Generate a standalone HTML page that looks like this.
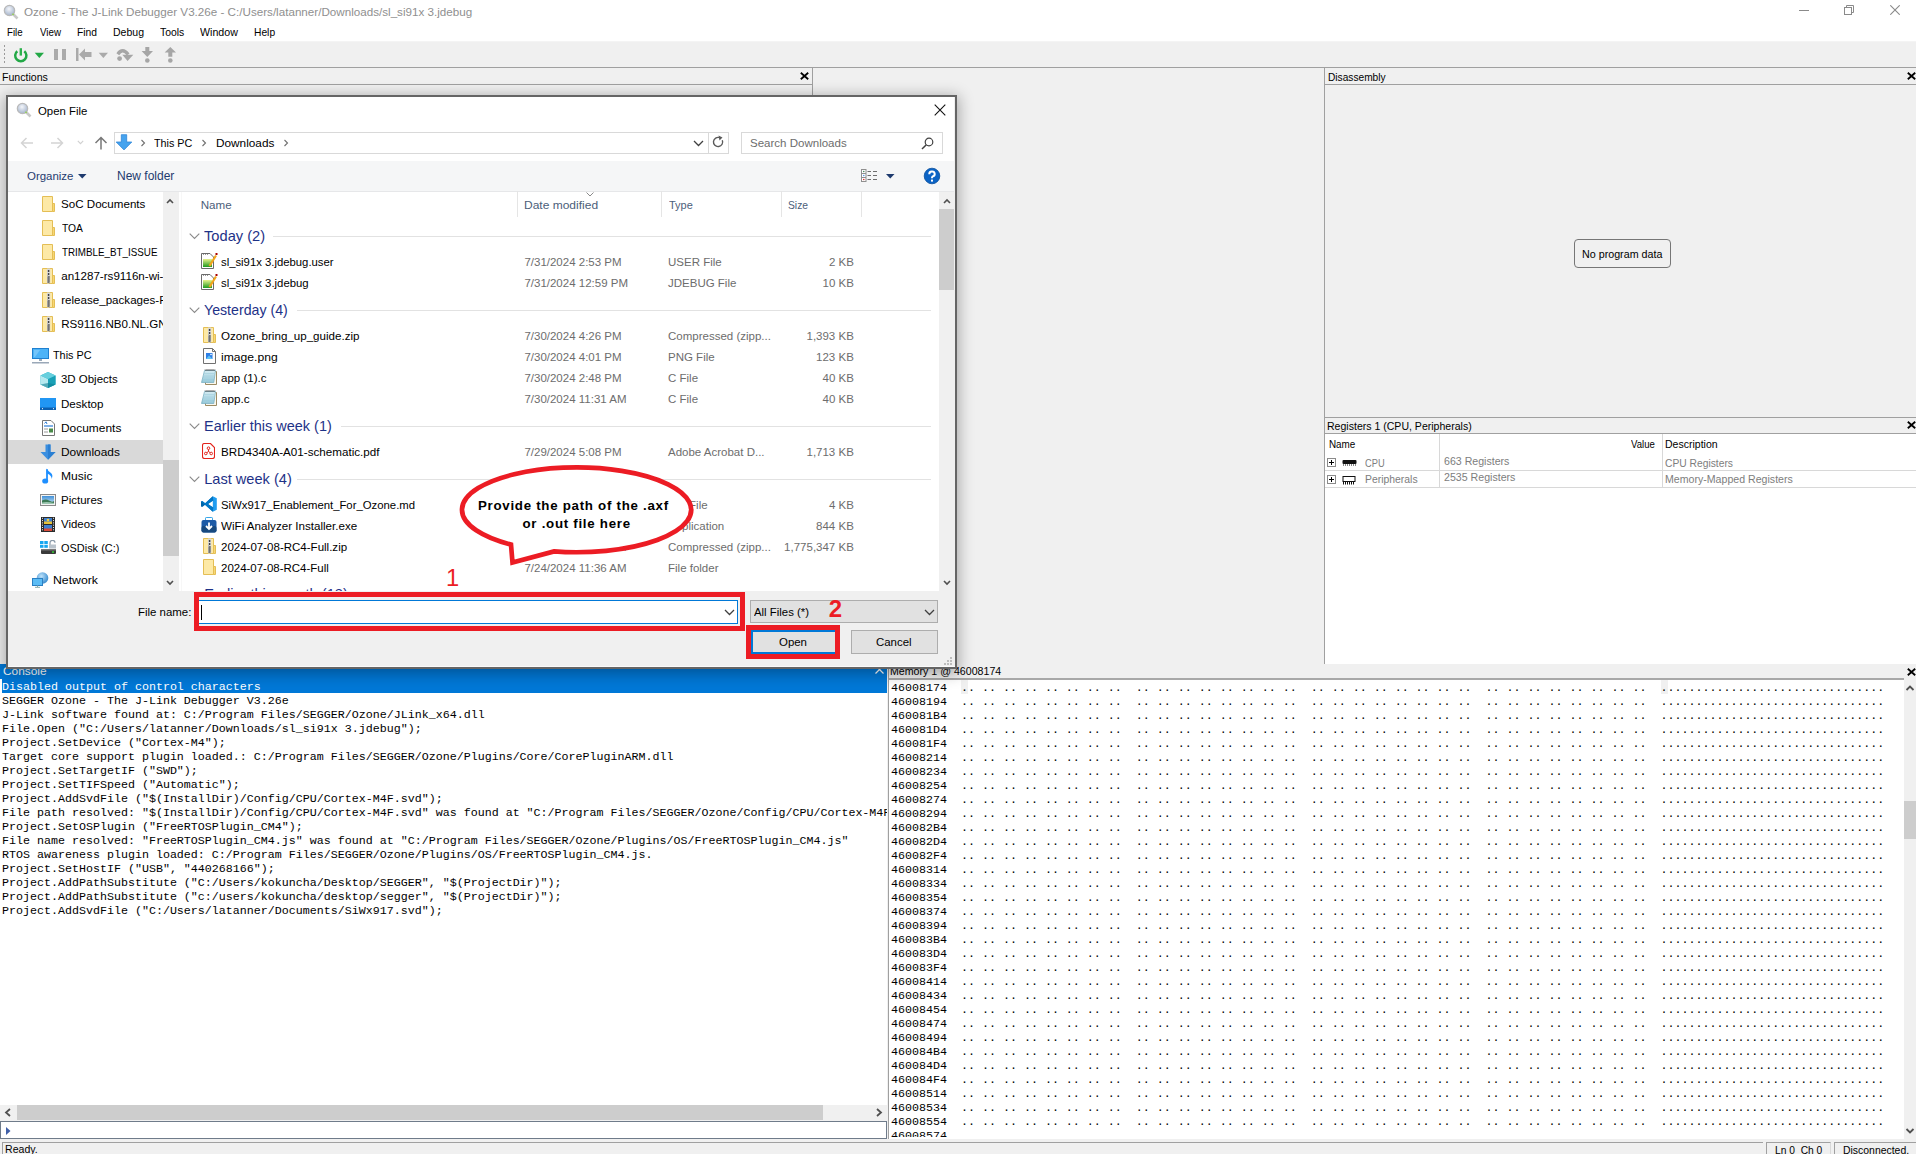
<!DOCTYPE html>
<html><head><meta charset="utf-8">
<style>
*{box-sizing:border-box;margin:0;padding:0}
html,body{width:1916px;height:1154px;overflow:hidden;background:#f0f0f0;font-family:"Liberation Sans",sans-serif;font-size:12px;color:#000;position:relative}
.a{position:absolute}
.t{position:absolute;white-space:pre;line-height:1}
.m{position:absolute;font-family:"Liberation Mono",monospace;font-size:11.67px;line-height:14px;white-space:pre;left:0}
</style></head><body>
<div class="a" style="left:0px;top:0px;width:1916px;height:42px;background:#fff;"></div>
<svg class="a" style="left:2px;top:3px;" width="17" height="17" viewBox="0 0 17 17"><defs><radialGradient id="mg" cx="0.45" cy="0.35" r="0.6"><stop offset="0" stop-color="#f4f6fa"/><stop offset="1" stop-color="#a9b8cf"/></radialGradient></defs><line x1="10" y1="10" x2="15.5" y2="15.5" stroke="#c8c8c8" stroke-width="2.6"/><circle cx="7.5" cy="7.5" r="5.2" fill="url(#mg)" stroke="#b9b9b9" stroke-width="1.2"/><circle cx="11" cy="11.3" r="0.9" fill="#8fd14f"/></svg>
<div class="t" style="top:6px;font-size:11.65px;color:#8f8f8f;left:24px;transform:scaleX(1.0000);transform-origin:left top;">Ozone - The J-Link Debugger V3.26e - C:/Users/latanner/Downloads/sl_si91x 3.jdebug</div>
<div class="a" style="left:1799px;top:10px;width:10px;height:1px;background:#8a8a8a;"></div>
<svg class="a" style="left:1844px;top:5px;" width="10" height="10" viewBox="0 0 10 10"><rect x="0.5" y="2.5" width="7" height="7" fill="none" stroke="#8a8a8a"/><path d="M2.5 2.5V0.5H9.5V7.5H7.5" fill="none" stroke="#8a8a8a"/></svg>
<svg class="a" style="left:1890px;top:5px;" width="10" height="10" viewBox="0 0 10 10"><path d="M0.3 0.3L9.7 9.7M9.7 0.3L0.3 9.7" stroke="#8a8a8a" stroke-width="1.1"/></svg>
<div class="t" style="top:27px;font-size:11px;color:#000;left:7px;transform:scaleX(0.8795);transform-origin:left top;">File</div>
<div class="t" style="top:27px;font-size:11px;color:#000;left:39.5px;transform:scaleX(0.8869);transform-origin:left top;">View</div>
<div class="t" style="top:27px;font-size:11px;color:#000;left:77px;transform:scaleX(0.9348);transform-origin:left top;">Find</div>
<div class="t" style="top:27px;font-size:11px;color:#000;left:113px;transform:scaleX(0.9561);transform-origin:left top;">Debug</div>
<div class="t" style="top:27px;font-size:11px;color:#000;left:160px;transform:scaleX(0.9461);transform-origin:left top;">Tools</div>
<div class="t" style="top:27px;font-size:11px;color:#000;left:200px;transform:scaleX(0.9678);transform-origin:left top;">Window</div>
<div class="t" style="top:27px;font-size:11px;color:#000;left:254px;transform:scaleX(0.9323);transform-origin:left top;">Help</div>
<div class="a" style="left:0px;top:41px;width:1916px;height:1px;background:#f4f4f4;"></div>
<div class="a" style="left:3.5px;top:45px;width:1.5px;height:1.5px;background:#9a9a9a;"></div>
<div class="a" style="left:3.5px;top:49px;width:1.5px;height:1.5px;background:#9a9a9a;"></div>
<div class="a" style="left:3.5px;top:53px;width:1.5px;height:1.5px;background:#9a9a9a;"></div>
<div class="a" style="left:3.5px;top:57px;width:1.5px;height:1.5px;background:#9a9a9a;"></div>
<div class="a" style="left:3.5px;top:61px;width:1.5px;height:1.5px;background:#9a9a9a;"></div>
<svg class="a" style="left:12px;top:46px;" width="18" height="18" viewBox="0 0 18 18"><path d="M5.3 5.2 A5.6 5.6 0 1 0 12.3 5.2" fill="none" stroke="#22a846" stroke-width="2.5"/><line x1="8.8" y1="2.2" x2="8.8" y2="9.6" stroke="#2db24d" stroke-width="2.4"/></svg>
<svg class="a" style="left:34px;top:52px;" width="11" height="7" viewBox="0 0 11 7"><path d="M0.7 0.7H10L5.35 6Z" fill="#22a846"/></svg>
<div class="a" style="left:54px;top:49px;width:4px;height:11px;background:#aaaaaa;"></div>
<div class="a" style="left:62px;top:49px;width:4px;height:11px;background:#aaaaaa;"></div>
<svg class="a" style="left:75px;top:47px;" width="18" height="15" viewBox="0 0 18 15"><rect x="1" y="1" width="2.5" height="13" fill="#aaaaaa"/><path d="M4 7.5L10 1.5V5H16.5V10H10V13.5Z" fill="#aaaaaa"/></svg>
<svg class="a" style="left:98px;top:52px;" width="11" height="7" viewBox="0 0 11 7"><path d="M0.7 0.7H10L5.35 6Z" fill="#aaaaaa"/></svg>
<svg class="a" style="left:116px;top:48px;" width="18" height="15" viewBox="0 0 18 15"><circle cx="3.6" cy="10.6" r="2.4" fill="#a6a6a6"/><path d="M1.8 6.2 Q6.5 -0.8 12.2 6.5" fill="none" stroke="#a6a6a6" stroke-width="3.4"/><path d="M6.3 6.8 L17.3 6.8 L11.6 13 Z" fill="#a6a6a6"/></svg>
<svg class="a" style="left:141px;top:46px;" width="13" height="18" viewBox="0 0 13 18"><path d="M4.3 1H8.3V5H12L6.3 11L0.6 5H4.3Z" fill="#a6a6a6"/><circle cx="6.3" cy="14.5" r="2.3" fill="#a6a6a6"/></svg>
<svg class="a" style="left:164px;top:46px;" width="13" height="18" viewBox="0 0 13 18"><path d="M6.3 1L12 6.5H8.3V10.8H4.3V6.5H0.6Z" fill="#a6a6a6"/><circle cx="6.3" cy="14.5" r="2.3" fill="#a6a6a6"/></svg>
<div class="a" style="left:0px;top:67px;width:1916px;height:1px;background:#a0a0a0;"></div>
<div class="t" style="top:72px;font-size:10.5px;color:#000;left:2px;transform:scaleX(1.0084);transform-origin:left top;">Functions</div>
<svg class="a" style="left:800px;top:72px;" width="9" height="8" viewBox="0 0 9 8"><path d="M0.8 0.8L8.2 7.2M8.2 0.8L0.8 7.2" stroke="#000" stroke-width="1.8"/></svg>
<div class="a" style="left:0px;top:84px;width:812px;height:1px;background:#a0a0a0;"></div>
<div class="a" style="left:812px;top:68px;width:1px;height:596px;background:#a0a0a0;"></div>
<div class="a" style="left:1324px;top:68px;width:1px;height:596px;background:#a0a0a0;"></div>
<div class="t" style="top:72px;font-size:10.5px;color:#000;left:1327.5px;transform:scaleX(0.9679);transform-origin:left top;">Disassembly</div>
<svg class="a" style="left:1907px;top:72px;" width="9" height="8" viewBox="0 0 9 8"><path d="M0.8 0.8L8.2 7.2M8.2 0.8L0.8 7.2" stroke="#000" stroke-width="1.8"/></svg>
<div class="a" style="left:1325px;top:84px;width:591px;height:1px;background:#a0a0a0;"></div>
<div class="a" style="left:1574px;top:239px;width:97px;height:29px;background:#f0f0f0;border:1px solid #767676;border-radius:4px"></div>
<div class="t" style="top:249px;font-size:11px;color:#000;left:1582px;transform:scaleX(0.9739);transform-origin:left top;">No program data</div>
<div class="a" style="left:1325px;top:417px;width:591px;height:1px;background:#a0a0a0;"></div>
<div class="t" style="top:421px;font-size:10.5px;color:#000;left:1327.3px;transform:scaleX(1.0039);transform-origin:left top;">Registers 1 (CPU, Peripherals)</div>
<svg class="a" style="left:1907px;top:421px;" width="9" height="8" viewBox="0 0 9 8"><path d="M0.8 0.8L8.2 7.2M8.2 0.8L0.8 7.2" stroke="#000" stroke-width="1.8"/></svg>
<div class="a" style="left:1325px;top:433px;width:591px;height:1px;background:#a0a0a0;"></div>
<div class="a" style="left:1325px;top:434px;width:591px;height:230px;background:#fff;"></div>
<div class="t" style="top:439px;font-size:10.5px;color:#000;left:1328.8px;transform:scaleX(0.9390);transform-origin:left top;">Name</div>
<div class="t" style="top:439px;font-size:10.5px;color:#000;right:259px;transform:scaleX(0.9131);transform-origin:left top;">Value</div>
<div class="t" style="top:439px;font-size:10.5px;color:#000;left:1665px;transform:scaleX(1.0014);transform-origin:left top;">Description</div>
<div class="a" style="left:1439px;top:434px;width:1px;height:54px;background:#d8d8d8;"></div>
<div class="a" style="left:1662px;top:434px;width:1px;height:54px;background:#d8d8d8;"></div>
<div class="a" style="left:1325px;top:470px;width:591px;height:1px;background:#d8d8d8;"></div>
<div class="a" style="left:1325px;top:487px;width:591px;height:1px;background:#d8d8d8;"></div>
<div class="a" style="left:1327px;top:458.3px;width:9px;height:9px;background:#fff;border:1px solid #8a8a8a"></div>
<div class="a" style="left:1329px;top:462.3px;width:5px;height:1px;background:#000;"></div>
<div class="a" style="left:1331px;top:460.3px;width:1px;height:5px;background:#000;"></div>
<div class="t" style="top:458px;font-size:10.5px;color:#7d7d7d;left:1364.7px;transform:scaleX(0.8836);transform-origin:left top;">CPU</div>
<div class="t" style="top:456px;font-size:10.5px;color:#7d7d7d;left:1443.6px;transform:scaleX(1.0095);transform-origin:left top;">663 Registers</div>
<div class="t" style="top:458px;font-size:10.5px;color:#7d7d7d;left:1665px;transform:scaleX(0.9794);transform-origin:left top;">CPU Registers</div>
<div class="a" style="left:1327px;top:475.0px;width:9px;height:9px;background:#fff;border:1px solid #8a8a8a"></div>
<div class="a" style="left:1329px;top:479.0px;width:5px;height:1px;background:#000;"></div>
<div class="a" style="left:1331px;top:477.0px;width:1px;height:5px;background:#000;"></div>
<div class="t" style="top:474px;font-size:10.5px;color:#7d7d7d;left:1364.7px;transform:scaleX(0.9905);transform-origin:left top;">Peripherals</div>
<div class="t" style="top:472px;font-size:10.5px;color:#7d7d7d;left:1443.6px;transform:scaleX(1.0108);transform-origin:left top;">2535 Registers</div>
<div class="t" style="top:474px;font-size:10.5px;color:#7d7d7d;left:1665px;transform:scaleX(1.0092);transform-origin:left top;">Memory-Mapped Registers</div>
<svg class="a" style="left:1342px;top:459px;" width="15" height="7" viewBox="0 0 15 7"><rect x="0.5" y="1" width="14" height="4" rx="1" fill="#111"/><path d="M1 6H14" stroke="#111" stroke-dasharray="1 1"/></svg>
<svg class="a" style="left:1342px;top:476px;" width="14" height="9" viewBox="0 0 14 9"><rect x="1" y="0.5" width="12" height="5" fill="none" stroke="#111"/><path d="M1 7H13" stroke="#111" stroke-width="3" stroke-dasharray="1 1"/></svg>
<div class="a" style="left:0px;top:664px;width:887px;height:15px;background:#0078d7;"></div>
<div class="t" style="top:666px;font-size:10.5px;color:#ffffff;left:3px;transform:scaleX(1.1288);transform-origin:left top;">Console</div>
<svg class="a" style="left:875px;top:665px;" width="9" height="9" viewBox="0 0 9 9"><path d="M0.5 0.5L8.5 8.5M8.5 0.5L0.5 8.5" stroke="#fff" stroke-width="1.2"/></svg>
<div class="a" style="left:0px;top:679px;width:887px;height:426px;background:#fff;"></div>
<div class="a" style="left:888px;top:664px;width:1px;height:475px;background:#a0a0a0;"></div>
<div class="a" style="left:2px;top:679px;width:885px;height:14px;background:#0078d7;"></div>
<div class="a" style="left:0;top:679px;width:887px;height:260px;overflow:hidden">
<div class="m" style="left:2px;top:1px;color:#fff">Disabled output of control characters</div>
<div class="m" style="left:2px;top:15px;color:#000">SEGGER Ozone - The J-Link Debugger V3.26e</div>
<div class="m" style="left:2px;top:29px;color:#000">J-Link software found at: C:/Program Files/SEGGER/Ozone/JLink_x64.dll</div>
<div class="m" style="left:2px;top:43px;color:#000">File.Open (&quot;C:/Users/latanner/Downloads/sl_si91x 3.jdebug&quot;);</div>
<div class="m" style="left:2px;top:57px;color:#000">Project.SetDevice (&quot;Cortex-M4&quot;);</div>
<div class="m" style="left:2px;top:71px;color:#000">Target core support plugin loaded.: C:/Program Files/SEGGER/Ozone/Plugins/Core/CorePluginARM.dll</div>
<div class="m" style="left:2px;top:85px;color:#000">Project.SetTargetIF (&quot;SWD&quot;);</div>
<div class="m" style="left:2px;top:99px;color:#000">Project.SetTIFSpeed (&quot;Automatic&quot;);</div>
<div class="m" style="left:2px;top:113px;color:#000">Project.AddSvdFile (&quot;$(InstallDir)/Config/CPU/Cortex-M4F.svd&quot;);</div>
<div class="m" style="left:2px;top:127px;color:#000">File path resolved: &quot;$(InstallDir)/Config/CPU/Cortex-M4F.svd&quot; was found at &quot;C:/Program Files/SEGGER/Ozone/Config/CPU/Cortex-M4F.svd&quot;</div>
<div class="m" style="left:2px;top:141px;color:#000">Project.SetOSPlugin (&quot;FreeRTOSPlugin_CM4&quot;);</div>
<div class="m" style="left:2px;top:155px;color:#000">File name resolved: &quot;FreeRTOSPlugin_CM4.js&quot; was found at &quot;C:/Program Files/SEGGER/Ozone/Plugins/OS/FreeRTOSPlugin_CM4.js&quot;</div>
<div class="m" style="left:2px;top:169px;color:#000">RTOS awareness plugin loaded: C:/Program Files/SEGGER/Ozone/Plugins/OS/FreeRTOSPlugin_CM4.js.</div>
<div class="m" style="left:2px;top:183px;color:#000">Project.SetHostIF (&quot;USB&quot;, &quot;440268166&quot;);</div>
<div class="m" style="left:2px;top:197px;color:#000">Project.AddPathSubstitute (&quot;C:/Users/kokuncha/Desktop/SEGGER&quot;, &quot;$(ProjectDir)&quot;);</div>
<div class="m" style="left:2px;top:211px;color:#000">Project.AddPathSubstitute (&quot;c:/users/kokuncha/desktop/segger&quot;, &quot;$(ProjectDir)&quot;);</div>
<div class="m" style="left:2px;top:225px;color:#000">Project.AddSvdFile (&quot;C:/Users/latanner/Documents/SiWx917.svd&quot;);</div>
</div>
<div class="a" style="left:0px;top:1105px;width:887px;height:15px;background:#f0f0f0;"></div>
<div class="a" style="left:17px;top:1105px;width:806px;height:15px;background:#cdcdcd;"></div>
<svg class="a" style="left:4px;top:1108px;" width="8" height="9" viewBox="0 0 8 9"><path d="M6 1L2 4.5L6 8" fill="none" stroke="#505050" stroke-width="1.8"/></svg>
<svg class="a" style="left:875px;top:1108px;" width="8" height="9" viewBox="0 0 8 9"><path d="M2 1L6 4.5L2 8" fill="none" stroke="#505050" stroke-width="1.8"/></svg>
<div class="a" style="left:0px;top:1121px;width:887px;height:18px;background:#fff;border:1px solid #6f7b8a"></div>
<svg class="a" style="left:6px;top:1127px;" width="6" height="9" viewBox="0 0 6 9"><path d="M0 0L4.5 4L0 8Z" fill="#3f5fa8"/></svg>
<div class="a" style="left:888px;top:664px;width:1028px;height:16px;background:#f0f0f0;"></div>
<div class="t" style="top:666px;font-size:10.5px;color:#000;left:890px;transform:scaleX(1.0120);transform-origin:left top;">Memory 1 @ 46008174</div>
<svg class="a" style="left:1907px;top:668px;" width="9" height="8" viewBox="0 0 9 8"><path d="M0.8 0.8L8.2 7.2M8.2 0.8L0.8 7.2" stroke="#000" stroke-width="1.8"/></svg>
<div class="a" style="left:888px;top:678px;width:1016px;height:2px;background:#a8a8a8;"></div>
<div class="a" style="left:889px;top:680px;width:1027px;height:459px;background:#fff;"></div>
<div class="a" style="left:1904px;top:680px;width:12px;height:459px;background:#f0f0f0;"></div>
<div class="a" style="left:1904px;top:801px;width:12px;height:38px;background:#cdcdcd;"></div>
<svg class="a" style="left:1905px;top:684px;" width="10" height="8" viewBox="0 0 10 8"><path d="M1.5 6L5 2.5L8.5 6" fill="none" stroke="#505050" stroke-width="1.8"/></svg>
<svg class="a" style="left:1905px;top:1127px;" width="10" height="8" viewBox="0 0 10 8"><path d="M1.5 2L5 5.5L8.5 2" fill="none" stroke="#505050" stroke-width="1.8"/></svg>
<div class="a" style="left:889px;top:681px;width:1015px;height:456px;overflow:hidden">
<div class="m" style="left:2px;top:0px;color:#000">46008174  .. .. .. .. .. .. .. ..  .. .. .. .. .. .. .. ..  .. .. .. .. .. .. .. ..  .. .. .. .. .. .. .. ..  ................................</div>
<div class="m" style="left:2px;top:14px;color:#000">46008194  .. .. .. .. .. .. .. ..  .. .. .. .. .. .. .. ..  .. .. .. .. .. .. .. ..  .. .. .. .. .. .. .. ..  ................................</div>
<div class="m" style="left:2px;top:28px;color:#000">460081B4  .. .. .. .. .. .. .. ..  .. .. .. .. .. .. .. ..  .. .. .. .. .. .. .. ..  .. .. .. .. .. .. .. ..  ................................</div>
<div class="m" style="left:2px;top:42px;color:#000">460081D4  .. .. .. .. .. .. .. ..  .. .. .. .. .. .. .. ..  .. .. .. .. .. .. .. ..  .. .. .. .. .. .. .. ..  ................................</div>
<div class="m" style="left:2px;top:56px;color:#000">460081F4  .. .. .. .. .. .. .. ..  .. .. .. .. .. .. .. ..  .. .. .. .. .. .. .. ..  .. .. .. .. .. .. .. ..  ................................</div>
<div class="m" style="left:2px;top:70px;color:#000">46008214  .. .. .. .. .. .. .. ..  .. .. .. .. .. .. .. ..  .. .. .. .. .. .. .. ..  .. .. .. .. .. .. .. ..  ................................</div>
<div class="m" style="left:2px;top:84px;color:#000">46008234  .. .. .. .. .. .. .. ..  .. .. .. .. .. .. .. ..  .. .. .. .. .. .. .. ..  .. .. .. .. .. .. .. ..  ................................</div>
<div class="m" style="left:2px;top:98px;color:#000">46008254  .. .. .. .. .. .. .. ..  .. .. .. .. .. .. .. ..  .. .. .. .. .. .. .. ..  .. .. .. .. .. .. .. ..  ................................</div>
<div class="m" style="left:2px;top:112px;color:#000">46008274  .. .. .. .. .. .. .. ..  .. .. .. .. .. .. .. ..  .. .. .. .. .. .. .. ..  .. .. .. .. .. .. .. ..  ................................</div>
<div class="m" style="left:2px;top:126px;color:#000">46008294  .. .. .. .. .. .. .. ..  .. .. .. .. .. .. .. ..  .. .. .. .. .. .. .. ..  .. .. .. .. .. .. .. ..  ................................</div>
<div class="m" style="left:2px;top:140px;color:#000">460082B4  .. .. .. .. .. .. .. ..  .. .. .. .. .. .. .. ..  .. .. .. .. .. .. .. ..  .. .. .. .. .. .. .. ..  ................................</div>
<div class="m" style="left:2px;top:154px;color:#000">460082D4  .. .. .. .. .. .. .. ..  .. .. .. .. .. .. .. ..  .. .. .. .. .. .. .. ..  .. .. .. .. .. .. .. ..  ................................</div>
<div class="m" style="left:2px;top:168px;color:#000">460082F4  .. .. .. .. .. .. .. ..  .. .. .. .. .. .. .. ..  .. .. .. .. .. .. .. ..  .. .. .. .. .. .. .. ..  ................................</div>
<div class="m" style="left:2px;top:182px;color:#000">46008314  .. .. .. .. .. .. .. ..  .. .. .. .. .. .. .. ..  .. .. .. .. .. .. .. ..  .. .. .. .. .. .. .. ..  ................................</div>
<div class="m" style="left:2px;top:196px;color:#000">46008334  .. .. .. .. .. .. .. ..  .. .. .. .. .. .. .. ..  .. .. .. .. .. .. .. ..  .. .. .. .. .. .. .. ..  ................................</div>
<div class="m" style="left:2px;top:210px;color:#000">46008354  .. .. .. .. .. .. .. ..  .. .. .. .. .. .. .. ..  .. .. .. .. .. .. .. ..  .. .. .. .. .. .. .. ..  ................................</div>
<div class="m" style="left:2px;top:224px;color:#000">46008374  .. .. .. .. .. .. .. ..  .. .. .. .. .. .. .. ..  .. .. .. .. .. .. .. ..  .. .. .. .. .. .. .. ..  ................................</div>
<div class="m" style="left:2px;top:238px;color:#000">46008394  .. .. .. .. .. .. .. ..  .. .. .. .. .. .. .. ..  .. .. .. .. .. .. .. ..  .. .. .. .. .. .. .. ..  ................................</div>
<div class="m" style="left:2px;top:252px;color:#000">460083B4  .. .. .. .. .. .. .. ..  .. .. .. .. .. .. .. ..  .. .. .. .. .. .. .. ..  .. .. .. .. .. .. .. ..  ................................</div>
<div class="m" style="left:2px;top:266px;color:#000">460083D4  .. .. .. .. .. .. .. ..  .. .. .. .. .. .. .. ..  .. .. .. .. .. .. .. ..  .. .. .. .. .. .. .. ..  ................................</div>
<div class="m" style="left:2px;top:280px;color:#000">460083F4  .. .. .. .. .. .. .. ..  .. .. .. .. .. .. .. ..  .. .. .. .. .. .. .. ..  .. .. .. .. .. .. .. ..  ................................</div>
<div class="m" style="left:2px;top:294px;color:#000">46008414  .. .. .. .. .. .. .. ..  .. .. .. .. .. .. .. ..  .. .. .. .. .. .. .. ..  .. .. .. .. .. .. .. ..  ................................</div>
<div class="m" style="left:2px;top:308px;color:#000">46008434  .. .. .. .. .. .. .. ..  .. .. .. .. .. .. .. ..  .. .. .. .. .. .. .. ..  .. .. .. .. .. .. .. ..  ................................</div>
<div class="m" style="left:2px;top:322px;color:#000">46008454  .. .. .. .. .. .. .. ..  .. .. .. .. .. .. .. ..  .. .. .. .. .. .. .. ..  .. .. .. .. .. .. .. ..  ................................</div>
<div class="m" style="left:2px;top:336px;color:#000">46008474  .. .. .. .. .. .. .. ..  .. .. .. .. .. .. .. ..  .. .. .. .. .. .. .. ..  .. .. .. .. .. .. .. ..  ................................</div>
<div class="m" style="left:2px;top:350px;color:#000">46008494  .. .. .. .. .. .. .. ..  .. .. .. .. .. .. .. ..  .. .. .. .. .. .. .. ..  .. .. .. .. .. .. .. ..  ................................</div>
<div class="m" style="left:2px;top:364px;color:#000">460084B4  .. .. .. .. .. .. .. ..  .. .. .. .. .. .. .. ..  .. .. .. .. .. .. .. ..  .. .. .. .. .. .. .. ..  ................................</div>
<div class="m" style="left:2px;top:378px;color:#000">460084D4  .. .. .. .. .. .. .. ..  .. .. .. .. .. .. .. ..  .. .. .. .. .. .. .. ..  .. .. .. .. .. .. .. ..  ................................</div>
<div class="m" style="left:2px;top:392px;color:#000">460084F4  .. .. .. .. .. .. .. ..  .. .. .. .. .. .. .. ..  .. .. .. .. .. .. .. ..  .. .. .. .. .. .. .. ..  ................................</div>
<div class="m" style="left:2px;top:406px;color:#000">46008514  .. .. .. .. .. .. .. ..  .. .. .. .. .. .. .. ..  .. .. .. .. .. .. .. ..  .. .. .. .. .. .. .. ..  ................................</div>
<div class="m" style="left:2px;top:420px;color:#000">46008534  .. .. .. .. .. .. .. ..  .. .. .. .. .. .. .. ..  .. .. .. .. .. .. .. ..  .. .. .. .. .. .. .. ..  ................................</div>
<div class="m" style="left:2px;top:434px;color:#000">46008554  .. .. .. .. .. .. .. ..  .. .. .. .. .. .. .. ..  .. .. .. .. .. .. .. ..  .. .. .. .. .. .. .. ..  ................................</div>
<div class="m" style="left:2px;top:448px;color:#000">46008574  .. .. .. .. .. .. .. ..  .. .. .. .. .. .. .. ..  .. .. .. .. .. .. .. ..  .. .. .. .. .. .. .. ..  ................................</div>
</div>
<div class="a" style="left:888px;top:664px;width:1px;height:475px;background:#a0a0a0;"></div>
<div class="a" style="left:961px;top:680px;width:7px;height:14px;background:rgba(0,0,0,0.06);"></div>
<div class="a" style="left:1661px;top:680px;width:7px;height:14px;background:rgba(0,0,0,0.06);"></div>
<div class="a" style="left:0px;top:1139px;width:1916px;height:15px;background:#f0f0f0;"></div>
<div class="a" style="left:2px;top:1142px;width:1761px;height:12px;background:none;border-top:1px solid #a0a0a0;border-left:1px solid #a0a0a0"></div>
<div class="t" style="top:1144px;font-size:10.5px;color:#000;left:5px;transform:scaleX(1.0062);transform-origin:left top;">Ready.</div>
<div class="a" style="left:1766px;top:1142px;width:65px;height:12px;background:none;border-top:1px solid #a0a0a0;border-left:1px solid #a0a0a0;border-right:1px solid #d8d8d8"></div>
<div class="t" style="top:1145px;font-size:10.5px;color:#000;left:1775px;transform:scaleX(0.9761);transform-origin:left top;">Ln 0  Ch 0</div>
<div class="a" style="left:1834px;top:1142px;width:82px;height:12px;background:none;border-top:1px solid #a0a0a0;border-left:1px solid #a0a0a0"></div>
<div class="t" style="top:1145px;font-size:10.5px;color:#000;left:1843px;transform:scaleX(0.9933);transform-origin:left top;">Disconnected.</div>
<div class="a" style="left:6px;top:95px;width:951px;height:574px;background:#f0f0f0;box-shadow:0 3px 14px 2px rgba(0,0,0,0.30);border:2px solid #656565"></div>
<div class="a" style="left:8px;top:666px;width:947px;height:1px;background:#fafafa;"></div>
<div class="a" style="left:8px;top:97px;width:946px;height:64px;background:#fff;"></div>
<div class="a" style="left:8px;top:161px;width:946px;height:30px;background:#f5f6f7;"></div>
<div class="a" style="left:8px;top:191px;width:155px;height:400px;background:#fff;"></div>
<div class="a" style="left:163px;top:191px;width:16px;height:400px;background:#f0f0f0;"></div>
<div class="a" style="left:179px;top:191px;width:760px;height:400px;background:#fff;"></div>
<div class="a" style="left:181px;top:191px;width:1px;height:400px;background:#f7f7f7;"></div>
<div class="a" style="left:939px;top:191px;width:15px;height:400px;background:#f0f0f0;"></div>
<div class="a" style="left:8px;top:191px;width:946px;height:1px;background:#e6e7e9;"></div>
<svg class="a" style="left:15px;top:101px;" width="17" height="17" viewBox="0 0 17 17"><defs><radialGradient id="mg2" cx="0.45" cy="0.35" r="0.6"><stop offset="0" stop-color="#f4f6fa"/><stop offset="1" stop-color="#a9b8cf"/></radialGradient></defs><line x1="10" y1="10" x2="15.5" y2="15.5" stroke="#c8c8c8" stroke-width="2.6"/><circle cx="7.5" cy="7.5" r="5.2" fill="url(#mg2)" stroke="#b9b9b9" stroke-width="1.2"/><circle cx="11" cy="11.3" r="0.9" fill="#8fd14f"/></svg>
<div class="t" style="top:105px;font-size:11.6px;color:#000;left:37.5px;transform:scaleX(0.9824);transform-origin:left top;">Open File</div>
<svg class="a" style="left:934px;top:104px;" width="12" height="12" viewBox="0 0 12 12"><path d="M0.7 0.7L11.3 11.3M11.3 0.7L0.7 11.3" stroke="#111" stroke-width="1.1"/></svg>
<svg class="a" style="left:20px;top:137px;" width="14" height="12" viewBox="0 0 14 12"><path d="M13 6H1.5M6.5 1L1.5 6L6.5 11" fill="none" stroke="#d4d4d4" stroke-width="1.5"/></svg>
<svg class="a" style="left:50px;top:137px;" width="14" height="12" viewBox="0 0 14 12"><path d="M1 6H12.5M7.5 1L12.5 6L7.5 11" fill="none" stroke="#d4d4d4" stroke-width="1.5"/></svg>
<svg class="a" style="left:77px;top:140px;" width="7" height="5" viewBox="0 0 7 5"><path d="M0.8 0.8L3.5 3.6L6.2 0.8" fill="none" stroke="#d0d0d0" stroke-width="1.1"/></svg>
<svg class="a" style="left:94px;top:136px;" width="14" height="14" viewBox="0 0 14 14"><path d="M7 13.5V1.5M1.5 7L7 1.5L12.5 7" fill="none" stroke="#787878" stroke-width="1.5"/></svg>
<div class="a" style="left:114px;top:132px;width:615px;height:22px;background:#fff;border:1px solid #d9d9d9"></div>
<div class="a" style="left:708px;top:132px;width:1px;height:22px;background:#d9d9d9;"></div>
<svg class="a" style="left:116px;top:134px;" width="17" height="17" viewBox="0 0 17 17"><path d="M5.3 0.7H10.7V8H15.8L8 15.9L0.2 8H5.3Z" fill="#46a3ee" stroke="#2f86d8" stroke-width="0.8"/></svg>
<svg class="a" style="left:140px;top:139px;" width="6" height="8" viewBox="0 0 6 8"><path d="M1.5 1L4.5 4L1.5 7" fill="none" stroke="#707070" stroke-width="1.1"/></svg>
<div class="t" style="top:138px;font-size:11.5px;color:#000;left:154.4px;transform:scaleX(0.9362);transform-origin:left top;">This PC</div>
<svg class="a" style="left:201px;top:139px;" width="6" height="8" viewBox="0 0 6 8"><path d="M1.5 1L4.5 4L1.5 7" fill="none" stroke="#707070" stroke-width="1.1"/></svg>
<div class="t" style="top:138px;font-size:11.5px;color:#000;left:216px;transform:scaleX(1.0264);transform-origin:left top;">Downloads</div>
<svg class="a" style="left:283px;top:139px;" width="6" height="8" viewBox="0 0 6 8"><path d="M1.5 1L4.5 4L1.5 7" fill="none" stroke="#707070" stroke-width="1.1"/></svg>
<svg class="a" style="left:693px;top:140px;" width="11" height="7" viewBox="0 0 11 7"><path d="M1 1L5.5 5.5L10 1" fill="none" stroke="#404040" stroke-width="1.3"/></svg>
<svg class="a" style="left:711px;top:135px;" width="15" height="15" viewBox="0 0 15 15"><path d="M11.3 5.2A4.6 4.6 0 1 1 8.7 2.7" fill="none" stroke="#5a5a5a" stroke-width="1.4"/><path d="M7.5 0.5L11.5 2.5L8.5 5.5Z" fill="#5a5a5a"/></svg>
<div class="a" style="left:741px;top:132px;width:202px;height:22px;background:#fff;border:1px solid #d9d9d9"></div>
<div class="t" style="top:138px;font-size:11.5px;color:#6d6d6d;left:750px;transform:scaleX(1.0016);transform-origin:left top;">Search Downloads</div>
<svg class="a" style="left:921px;top:137px;" width="13" height="13" viewBox="0 0 13 13"><circle cx="8" cy="5" r="3.8" fill="none" stroke="#404040" stroke-width="1.2"/><path d="M5.3 7.7L1 12" stroke="#404040" stroke-width="1.5"/></svg>
<div class="t" style="top:171px;font-size:11.4px;color:#1e3a6e;left:26.5px;transform:scaleX(1.0053);transform-origin:left top;">Organize</div>
<svg class="a" style="left:78px;top:174px;" width="9" height="5" viewBox="0 0 9 5"><path d="M0 0H8.5L4.25 4.5Z" fill="#1e3a6e"/></svg>
<div class="t" style="top:171px;font-size:11.9px;color:#1e3a6e;left:117.3px;transform:scaleX(1.0091);transform-origin:left top;">New folder</div>
<svg class="a" style="left:860px;top:168px;" width="19" height="15" viewBox="0 0 19 15"><rect x="1.5" y="1.5" width="4.5" height="12" fill="#fff" stroke="#8f8f8f"/><path d="M1.5 5.5H6M1.5 9.5H6" stroke="#8f8f8f"/><circle cx="3.75" cy="3.5" r="0.8" fill="#4a8a5a"/><circle cx="3.75" cy="7.5" r="0.8" fill="#5a9ae8"/><circle cx="3.75" cy="11.5" r="0.8" fill="#e03030"/><path d="M7.5 3.5H11M13 3.5H17M7.5 7.5H11M13 7.5H17M7.5 11.5H11M13 11.5H17" stroke="#6e6e6e" stroke-width="1"/></svg>
<svg class="a" style="left:886px;top:174px;" width="9" height="5" viewBox="0 0 9 5"><path d="M0 0H8.5L4.25 4.5Z" fill="#1e3a6e"/></svg>
<svg class="a" style="left:923px;top:167px;" width="18" height="18" viewBox="0 0 18 18"><circle cx="9" cy="9" r="7.8" fill="#0b63c5" stroke="#0a4f9c" stroke-width="0.8"/><path d="M6.3 7.2A2.7 2.6 0 1 1 9.4 9.6Q9 10 9 11.2" fill="none" stroke="#fff" stroke-width="2"/><rect x="8" y="12.6" width="2" height="2" fill="#fff"/></svg>
<div class="a" style="left:8px;top:440px;width:155px;height:24px;background:#d9d9d9;"></div>
<div class="a" style="left:8px;top:191px;width:155px;height:400px;overflow:hidden">
<svg class="a" style="left:34px;top:5px;" width="13" height="16" viewBox="0 0 13 16"><path d="M0.5 0.5H10.5V15.5H0.5Z" fill="#fde9a6" stroke="#e4be55"/><path d="M10.5 7.5H12.5V15.5H10.5Z" fill="#f7d774" stroke="#e4be55"/></svg>
<div class="t" style="top:7px;font-size:11.6px;color:#000;left:53.2px;transform:scaleX(0.9994);transform-origin:left top;">SoC Documents</div>
<svg class="a" style="left:34px;top:29px;" width="13" height="16" viewBox="0 0 13 16"><path d="M0.5 0.5H10.5V15.5H0.5Z" fill="#fde9a6" stroke="#e4be55"/><path d="M10.5 7.5H12.5V15.5H10.5Z" fill="#f7d774" stroke="#e4be55"/></svg>
<div class="t" style="top:31px;font-size:11.6px;color:#000;left:53.9px;transform:scaleX(0.8843);transform-origin:left top;">TOA</div>
<svg class="a" style="left:34px;top:53px;" width="13" height="16" viewBox="0 0 13 16"><path d="M0.5 0.5H10.5V15.5H0.5Z" fill="#fde9a6" stroke="#e4be55"/><path d="M10.5 7.5H12.5V15.5H10.5Z" fill="#f7d774" stroke="#e4be55"/></svg>
<div class="t" style="top:55px;font-size:11.6px;color:#000;left:53.9px;transform:scaleX(0.8466);transform-origin:left top;">TRIMBLE_BT_ISSUE</div>
<svg class="a" style="left:34px;top:77px;" width="13" height="16" viewBox="0 0 13 16"><path d="M0.5 0.5H10.5V15.5H0.5Z" fill="#fde9a6" stroke="#e4be55"/><path d="M10.5 7.5H12.5V15.5H10.5Z" fill="#f7d774" stroke="#e4be55"/><rect x="5" y="0.5" width="3.2" height="15" fill="#d8d8d8"/><circle cx="6.6" cy="3" r="0.9" fill="#333"/><circle cx="6.6" cy="6" r="0.9" fill="#333"/><path d="M5.4 8L7.8 9L5.4 10L7.8 11L5.4 12L7.8 13L5.4 14L7.8 15" fill="none" stroke="#555" stroke-width="0.8"/></svg>
<div class="t" style="top:79px;font-size:11.6px;color:#000;left:53.2px;">an1287-rs9116n-wi-fi-sdk</div>
<svg class="a" style="left:34px;top:101px;" width="13" height="16" viewBox="0 0 13 16"><path d="M0.5 0.5H10.5V15.5H0.5Z" fill="#fde9a6" stroke="#e4be55"/><path d="M10.5 7.5H12.5V15.5H10.5Z" fill="#f7d774" stroke="#e4be55"/><rect x="5" y="0.5" width="3.2" height="15" fill="#d8d8d8"/><circle cx="6.6" cy="3" r="0.9" fill="#333"/><circle cx="6.6" cy="6" r="0.9" fill="#333"/><path d="M5.4 8L7.8 9L5.4 10L7.8 11L5.4 12L7.8 13L5.4 14L7.8 15" fill="none" stroke="#555" stroke-width="0.8"/></svg>
<div class="t" style="top:103px;font-size:11.6px;color:#000;left:53.2px;">release_packages-RS9116</div>
<svg class="a" style="left:34px;top:125px;" width="13" height="16" viewBox="0 0 13 16"><path d="M0.5 0.5H10.5V15.5H0.5Z" fill="#fde9a6" stroke="#e4be55"/><path d="M10.5 7.5H12.5V15.5H10.5Z" fill="#f7d774" stroke="#e4be55"/><rect x="5" y="0.5" width="3.2" height="15" fill="#d8d8d8"/><circle cx="6.6" cy="3" r="0.9" fill="#333"/><circle cx="6.6" cy="6" r="0.9" fill="#333"/><path d="M5.4 8L7.8 9L5.4 10L7.8 11L5.4 12L7.8 13L5.4 14L7.8 15" fill="none" stroke="#555" stroke-width="0.8"/></svg>
<div class="t" style="top:127px;font-size:11.6px;color:#000;left:53.2px;">RS9116.NB0.NL.GNU</div>
<svg class="a" style="left:24px;top:157px;" width="17" height="16" viewBox="0 0 17 16"><rect x="0.5" y="0.5" width="16" height="10" fill="#4db3f7" stroke="#1f80d0"/><path d="M2 2H8L3 9H2Z" fill="#8fd0fb" opacity=".6"/><rect x="7" y="11" width="3" height="2" fill="#9ab"/><rect x="0" y="14" width="17" height="1.5" fill="#9aa8b8"/></svg>
<div class="t" style="top:158px;font-size:11.6px;color:#000;left:45.3px;transform:scaleX(0.9354);transform-origin:left top;">This PC</div>
<svg class="a" style="left:32px;top:181px;" width="16" height="16" viewBox="0 0 16 16"><path d="M8 0L15.5 3.5V12.5L8 16L0.5 12.5V3.5Z" fill="#2bb3c7"/><path d="M0.5 3.5L8 7V16L0.5 12.5Z" fill="#b6e9ef"/><path d="M8 7L15.5 3.5V12.5L8 16Z" fill="#19a0b6"/><path d="M0.5 3.5L8 0L15.5 3.5L8 7Z" fill="#66cfdd"/><path d="M8 11L15.5 12.5L8 16L0.5 12.5Z" fill="#0f7f92" opacity=".6"/></svg>
<div class="t" style="top:182px;font-size:11.6px;color:#000;left:53.2px;transform:scaleX(0.9880);transform-origin:left top;">3D Objects</div>
<svg class="a" style="left:32px;top:207px;" width="16" height="12" viewBox="0 0 16 12"><rect x="0" y="0" width="16" height="12" fill="#2196f3"/><rect x="0" y="9.5" width="16" height="2.5" fill="#0b5fb0"/><path d="M2 10.7H3M13 10.7H14" stroke="#fff" stroke-width="1"/></svg>
<div class="t" style="top:207px;font-size:11.6px;color:#000;left:53.2px;transform:scaleX(0.9990);transform-origin:left top;">Desktop</div>
<svg class="a" style="left:34px;top:229px;" width="13" height="16" viewBox="0 0 13 16"><path d="M0.5 0.5H9L12.5 4V15.5H0.5Z" fill="#fff" stroke="#777"/><path d="M2.5 3.5L4 1.8L5 4" fill="none" stroke="#2a7bd6"/><path d="M2 6H11" stroke="#2a7bd6" stroke-width="1.2"/><path d="M2 9H6M2 12H6" stroke="#999"/><rect x="7" y="8.5" width="4" height="4" fill="#4a8a4a"/></svg>
<div class="t" style="top:231px;font-size:11.6px;color:#000;left:53.2px;transform:scaleX(1.0295);transform-origin:left top;">Documents</div>
<svg class="a" style="left:32px;top:253px;" width="16" height="16" viewBox="0 0 16 16"><path d="M5.5 0.5H10.5V8H15.5L8 15.8L0.5 8H5.5Z" fill="#3b8fe0"/><path d="M8 0.5H10.5V8H15.5L8 15.8Z" fill="#2b7fd2"/></svg>
<div class="t" style="top:255px;font-size:11.6px;color:#000;left:53.2px;transform:scaleX(1.0263);transform-origin:left top;">Downloads</div>
<svg class="a" style="left:34px;top:277px;" width="12" height="16" viewBox="0 0 12 16"><path d="M5 1.2V12.5" stroke="#1e8fff" stroke-width="1.8"/><path d="M4.5 0.5Q6 3 9 5Q11.5 7.5 9.5 11Q10 7.5 5 5.5Z" fill="#1e8fff"/><ellipse cx="3.2" cy="13" rx="3" ry="2.6" fill="#1e8fff"/></svg>
<div class="t" style="top:279px;font-size:11.6px;color:#000;left:53.2px;transform:scaleX(1.0427);transform-origin:left top;">Music</div>
<svg class="a" style="left:32px;top:303px;" width="16" height="12" viewBox="0 0 16 12"><defs><linearGradient id="gsky" x1="0" y1="0" x2="0" y2="1"><stop offset="0" stop-color="#3f8fd8"/><stop offset="1" stop-color="#cfe8f5"/></linearGradient></defs><rect x="0.5" y="0.5" width="15" height="11" fill="#f4f4f4" stroke="#8a8a8a"/><rect x="2" y="2" width="12" height="8" fill="url(#gsky)"/><path d="M2 6.5Q6 4.5 9 6.5T14 7V10H2Z" fill="#3d7a55"/><path d="M2 8.5Q7 7.5 14 9V10H2Z" fill="#9cc6b0"/></svg>
<div class="t" style="top:303px;font-size:11.6px;color:#000;left:53.2px;transform:scaleX(0.9927);transform-origin:left top;">Pictures</div>
<svg class="a" style="left:33px;top:326px;" width="14" height="15" viewBox="0 0 14 15"><rect x="0" y="0" width="14" height="15" fill="#2b2b2b"/><rect x="3" y="1" width="8" height="6" fill="#3f7fd0"/><rect x="3" y="8" width="8" height="6" fill="#3f7fd0"/><rect x="3" y="4.5" width="8" height="2.5" fill="#e7c23a"/><rect x="3" y="11.5" width="8" height="2.5" fill="#d94b3a"/><circle cx="7" cy="3" r="1.3" fill="#f0d040"/><path d="M1.5 0.8V14.5M12.5 0.8V14.5" stroke="#eee" stroke-width="1" stroke-dasharray="1 1.3"/></svg>
<div class="t" style="top:327px;font-size:11.6px;color:#000;left:53.2px;transform:scaleX(0.9840);transform-origin:left top;">Videos</div>
<svg class="a" style="left:32px;top:349px;" width="16" height="15" viewBox="0 0 16 15"><rect x="0" y="1" width="3.5" height="3" fill="#16a6f0"/><rect x="4.3" y="1" width="3.5" height="3" fill="#16a6f0"/><rect x="0" y="4.8" width="3.5" height="3" fill="#16a6f0"/><rect x="4.3" y="4.8" width="3.5" height="3" fill="#16a6f0"/><path d="M10 5V2.8A2.5 2.5 0 0 1 15 2.8" fill="none" stroke="#8a9aa8" stroke-width="1.2"/><rect x="9" y="4.5" width="7" height="4" fill="#b9c3cc"/><rect x="1" y="9" width="15" height="5" rx="1" fill="#3a3a3a"/><rect x="1" y="9" width="15" height="1.5" fill="#777"/><rect x="12" y="11.3" width="2" height="1.5" fill="#3c3"/></svg>
<div class="t" style="top:351px;font-size:11.6px;color:#000;left:53.2px;transform:scaleX(0.9441);transform-origin:left top;">OSDisk (C:)</div>
<svg class="a" style="left:24px;top:381px;" width="17" height="16" viewBox="0 0 17 16"><defs><radialGradient id="gglobe" cx="0.4" cy="0.35" r="0.7"><stop offset="0" stop-color="#bfe3fb"/><stop offset="1" stop-color="#2f86cc"/></radialGradient></defs><circle cx="10.5" cy="6" r="5.8" fill="url(#gglobe)"/><rect x="0.5" y="6.5" width="10" height="7" fill="#5bbcf5" stroke="#2a80c4"/><path d="M5.5 13.5V15M3 15.3H8" stroke="#8aa" stroke-width="1"/></svg>
<div class="t" style="top:383px;font-size:11.6px;color:#000;left:45.3px;transform:scaleX(1.0570);transform-origin:left top;">Network</div>
</div>
<div class="a" style="left:163px;top:460px;width:16px;height:96px;background:#cdcdcd;"></div>
<svg class="a" style="left:166px;top:198px;" width="8" height="6" viewBox="0 0 8 6"><path d="M1 5L4 2L7 5" fill="none" stroke="#505050" stroke-width="1.6"/></svg>
<svg class="a" style="left:166px;top:580px;" width="8" height="6" viewBox="0 0 8 6"><path d="M1 1L4 4L7 1" fill="none" stroke="#505050" stroke-width="1.6"/></svg>
<div class="t" style="top:199px;font-size:11.6px;color:#4c607a;left:200.7px;">Name</div>
<div class="t" style="top:199px;font-size:11.6px;color:#4c607a;left:524.4px;transform:scaleX(1.0353);transform-origin:left top;">Date modified</div>
<div class="t" style="top:199px;font-size:11.6px;color:#4c607a;left:668.5px;transform:scaleX(0.9466);transform-origin:left top;">Type</div>
<div class="t" style="top:199px;font-size:11.6px;color:#4c607a;left:788.3px;transform:scaleX(0.8864);transform-origin:left top;">Size</div>
<div class="a" style="left:517px;top:191px;width:1px;height:26px;background:#e5e5e5;"></div>
<div class="a" style="left:661px;top:191px;width:1px;height:26px;background:#e5e5e5;"></div>
<div class="a" style="left:781px;top:191px;width:1px;height:26px;background:#e5e5e5;"></div>
<div class="a" style="left:861px;top:191px;width:1px;height:26px;background:#e5e5e5;"></div>
<svg class="a" style="left:586px;top:192px;" width="8" height="5" viewBox="0 0 8 5"><path d="M0.5 0.5L4 4L7.5 0.5" fill="none" stroke="#8a8a8a" stroke-width="1"/></svg>
<div class="a" style="left:939px;top:209px;width:15px;height:81px;background:#cdcdcd;"></div>
<svg class="a" style="left:943px;top:198px;" width="8" height="6" viewBox="0 0 8 6"><path d="M1 5L4 2L7 5" fill="none" stroke="#505050" stroke-width="1.6"/></svg>
<svg class="a" style="left:943px;top:580px;" width="8" height="6" viewBox="0 0 8 6"><path d="M1 1L4 4L7 1" fill="none" stroke="#505050" stroke-width="1.6"/></svg>
<div class="a" style="left:182px;top:191px;width:757px;height:400px;overflow:hidden">
<svg class="a" style="left:7px;top:41.599999999999994px;" width="11" height="7" viewBox="0 0 11 7"><path d="M0.7 0.7L5.5 5.5L10.3 0.7" fill="none" stroke="#8a8a8a" stroke-width="1.1"/></svg>
<div class="t" style="top:38px;font-size:14.6px;color:#1e3287;left:22.19999999999999px;transform:scaleX(1.0042);transform-origin:left top;">Today (2)</div>
<div class="a" style="left:91px;top:45.20000000000002px;width:658px;height:1px;background:#e2e2e2;"></div>
<svg class="a" style="left:19px;top:61.89999999999998px;" width="17" height="16" viewBox="0 0 17 16"><path d="M0.5 0.5H9L12.5 4V15.5H0.5Z" fill="#fff" stroke="#6b6b6b"/><path d="M2 1.5H3M4 1.5H5M6 1.5H7" stroke="#999"/><defs><linearGradient id="gj" x1="0" y1="0" x2="0" y2="1"><stop offset="0" stop-color="#e8f28a"/><stop offset="1" stop-color="#1f9a1f"/></linearGradient></defs><rect x="2" y="6" width="9" height="8" fill="url(#gj)"/><path d="M8.5 13L15 2.5" stroke="#f2a51c" stroke-width="2.2"/><rect x="14.5" y="0" width="2" height="2" fill="#a00"/></svg>
<div class="t" style="top:66px;font-size:11.4px;color:#000;left:39.099999999999994px;transform:scaleX(0.9927);transform-origin:left top;">sl_si91x 3.jdebug.user</div>
<div class="t" style="top:66px;font-size:11.5px;color:#6d6d6d;left:342.4px;">7/31/2024 2:53 PM</div>
<div class="t" style="top:66px;font-size:11.5px;color:#6d6d6d;left:486px;">USER File</div>
<div class="t" style="top:66px;font-size:11.5px;color:#6d6d6d;right:85.20000000000005px;">2 KB</div>
<svg class="a" style="left:19px;top:82.60000000000002px;" width="17" height="16" viewBox="0 0 17 16"><path d="M0.5 0.5H9L12.5 4V15.5H0.5Z" fill="#fff" stroke="#6b6b6b"/><path d="M2 1.5H3M4 1.5H5M6 1.5H7" stroke="#999"/><defs><linearGradient id="gj" x1="0" y1="0" x2="0" y2="1"><stop offset="0" stop-color="#e8f28a"/><stop offset="1" stop-color="#1f9a1f"/></linearGradient></defs><rect x="2" y="6" width="9" height="8" fill="url(#gj)"/><path d="M8.5 13L15 2.5" stroke="#f2a51c" stroke-width="2.2"/><rect x="14.5" y="0" width="2" height="2" fill="#a00"/></svg>
<div class="t" style="top:87px;font-size:11.4px;color:#000;left:39.099999999999994px;transform:scaleX(0.9955);transform-origin:left top;">sl_si91x 3.jdebug</div>
<div class="t" style="top:87px;font-size:11.5px;color:#6d6d6d;left:342.4px;">7/31/2024 12:59 PM</div>
<div class="t" style="top:87px;font-size:11.5px;color:#6d6d6d;left:486px;">JDEBUG File</div>
<div class="t" style="top:87px;font-size:11.5px;color:#6d6d6d;right:85.20000000000005px;">10 KB</div>
<svg class="a" style="left:7px;top:115.60000000000002px;" width="11" height="7" viewBox="0 0 11 7"><path d="M0.7 0.7L5.5 5.5L10.3 0.7" fill="none" stroke="#8a8a8a" stroke-width="1.1"/></svg>
<div class="t" style="top:112px;font-size:14.6px;color:#1e3287;left:22.19999999999999px;transform:scaleX(0.9712);transform-origin:left top;">Yesterday (4)</div>
<div class="a" style="left:115px;top:119.19999999999999px;width:634px;height:1px;background:#e2e2e2;"></div>
<svg class="a" style="left:21px;top:135.60000000000002px;" width="13" height="16" viewBox="0 0 13 16"><path d="M0.5 0.5H10.5V15.5H0.5Z" fill="#fde9a6" stroke="#e4be55"/><path d="M10.5 7.5H12.5V15.5H10.5Z" fill="#f7d774" stroke="#e4be55"/><rect x="5" y="0.5" width="3.2" height="15" fill="#d8d8d8"/><circle cx="6.6" cy="3" r="0.9" fill="#333"/><circle cx="6.6" cy="6" r="0.9" fill="#333"/><path d="M5.4 8L7.8 9L5.4 10L7.8 11L5.4 12L7.8 13L5.4 14L7.8 15" fill="none" stroke="#555" stroke-width="0.8"/></svg>
<div class="t" style="top:140px;font-size:11.4px;color:#000;left:39.099999999999994px;transform:scaleX(1.0170);transform-origin:left top;">Ozone_bring_up_guide.zip</div>
<div class="t" style="top:140px;font-size:11.5px;color:#6d6d6d;left:342.4px;">7/30/2024 4:26 PM</div>
<div class="t" style="top:140px;font-size:11.5px;color:#6d6d6d;left:486px;">Compressed (zipp...</div>
<div class="t" style="top:140px;font-size:11.5px;color:#6d6d6d;right:85.20000000000005px;">1,393 KB</div>
<svg class="a" style="left:21px;top:156.60000000000002px;" width="13" height="16" viewBox="0 0 13 16"><path d="M0.5 0.5H9.5L12.5 3.5V15.5H0.5Z" fill="#fdfdfd" stroke="#707070"/><path d="M9.5 0.5V3.5H12.5" fill="none" stroke="#707070"/><rect x="3" y="5" width="6.5" height="6" fill="#2f7fe6"/><path d="M3 11L6 7.5L9.5 11Z" fill="#5fc3f5"/><circle cx="8" cy="6.5" r="0.8" fill="#fff"/></svg>
<div class="t" style="top:161px;font-size:11.4px;color:#000;left:39.099999999999994px;transform:scaleX(1.0650);transform-origin:left top;">image.png</div>
<div class="t" style="top:161px;font-size:11.5px;color:#6d6d6d;left:342.4px;">7/30/2024 4:01 PM</div>
<div class="t" style="top:161px;font-size:11.5px;color:#6d6d6d;left:486px;">PNG File</div>
<div class="t" style="top:161px;font-size:11.5px;color:#6d6d6d;right:85.20000000000005px;">123 KB</div>
<svg class="a" style="left:19px;top:177.60000000000002px;" width="17" height="16" viewBox="0 0 17 16"><defs><linearGradient id="gc" x1="0" y1="0" x2="0" y2="1"><stop offset="0" stop-color="#d5ecf3"/><stop offset="1" stop-color="#8cc3d6"/></linearGradient></defs><path d="M4.5 2.5H15.5V15.5H4.5Z" fill="#fbf8ee" stroke="#9b8a63"/><path d="M3.5 1.5H14.5L12.8 13.5H0.5Z" fill="url(#gc)" stroke="#7fb2c4" stroke-width="0.8"/><path d="M3 4.5H13.5M2.6 7H13.2M2.2 9.5H12.8M1.8 12H12.4" stroke="#a9d3e0" stroke-width="0.8"/><path d="M4 0.3L5 1.8L6 0.3L7 1.8L8 0.3L9 1.8L10 0.3L11 1.8L12 0.3L13 1.8L14 0.3" fill="none" stroke="#444" stroke-width="0.7"/></svg>
<div class="t" style="top:182px;font-size:11.4px;color:#000;left:39.099999999999994px;transform:scaleX(1.0111);transform-origin:left top;">app (1).c</div>
<div class="t" style="top:182px;font-size:11.5px;color:#6d6d6d;left:342.4px;">7/30/2024 2:48 PM</div>
<div class="t" style="top:182px;font-size:11.5px;color:#6d6d6d;left:486px;">C File</div>
<div class="t" style="top:182px;font-size:11.5px;color:#6d6d6d;right:85.20000000000005px;">40 KB</div>
<svg class="a" style="left:19px;top:198.60000000000002px;" width="17" height="16" viewBox="0 0 17 16"><defs><linearGradient id="gc" x1="0" y1="0" x2="0" y2="1"><stop offset="0" stop-color="#d5ecf3"/><stop offset="1" stop-color="#8cc3d6"/></linearGradient></defs><path d="M4.5 2.5H15.5V15.5H4.5Z" fill="#fbf8ee" stroke="#9b8a63"/><path d="M3.5 1.5H14.5L12.8 13.5H0.5Z" fill="url(#gc)" stroke="#7fb2c4" stroke-width="0.8"/><path d="M3 4.5H13.5M2.6 7H13.2M2.2 9.5H12.8M1.8 12H12.4" stroke="#a9d3e0" stroke-width="0.8"/><path d="M4 0.3L5 1.8L6 0.3L7 1.8L8 0.3L9 1.8L10 0.3L11 1.8L12 0.3L13 1.8L14 0.3" fill="none" stroke="#444" stroke-width="0.7"/></svg>
<div class="t" style="top:203px;font-size:11.4px;color:#000;left:39.099999999999994px;transform:scaleX(1.0250);transform-origin:left top;">app.c</div>
<div class="t" style="top:203px;font-size:11.5px;color:#6d6d6d;left:342.4px;">7/30/2024 11:31 AM</div>
<div class="t" style="top:203px;font-size:11.5px;color:#6d6d6d;left:486px;">C File</div>
<div class="t" style="top:203px;font-size:11.5px;color:#6d6d6d;right:85.20000000000005px;">40 KB</div>
<svg class="a" style="left:7px;top:231.60000000000002px;" width="11" height="7" viewBox="0 0 11 7"><path d="M0.7 0.7L5.5 5.5L10.3 0.7" fill="none" stroke="#8a8a8a" stroke-width="1.1"/></svg>
<div class="t" style="top:228px;font-size:14.6px;color:#1e3287;left:22.19999999999999px;transform:scaleX(0.9908);transform-origin:left top;">Earlier this week (1)</div>
<div class="a" style="left:159px;top:235.2px;width:590px;height:1px;background:#e2e2e2;"></div>
<svg class="a" style="left:20px;top:251.60000000000002px;" width="13" height="16" viewBox="0 0 13 16"><path d="M2.5 0.5H8.5L12.5 4.5V13.5Q12.5 15.5 10.5 15.5H2.5Q0.5 15.5 0.5 13.5V2.5Q0.5 0.5 2.5 0.5Z" fill="#fff" stroke="#e3231b" stroke-width="1.1"/><circle cx="6.5" cy="5.2" r="1.3" fill="none" stroke="#e3231b"/><circle cx="3.8" cy="10.5" r="1.3" fill="none" stroke="#e3231b"/><circle cx="9.2" cy="10.5" r="1.3" fill="none" stroke="#e3231b"/><path d="M6.5 6.5L6.5 8.5M6.5 8.5L4.8 9.7M6.5 8.5L8.2 9.7" stroke="#e3231b"/></svg>
<div class="t" style="top:256px;font-size:11.4px;color:#000;left:39.099999999999994px;transform:scaleX(1.0215);transform-origin:left top;">BRD4340A-A01-schematic.pdf</div>
<div class="t" style="top:256px;font-size:11.5px;color:#6d6d6d;left:342.4px;">7/29/2024 5:08 PM</div>
<div class="t" style="top:256px;font-size:11.5px;color:#6d6d6d;left:486px;">Adobe Acrobat D...</div>
<div class="t" style="top:256px;font-size:11.5px;color:#6d6d6d;right:85.20000000000005px;">1,713 KB</div>
<svg class="a" style="left:7px;top:284.6px;" width="11" height="7" viewBox="0 0 11 7"><path d="M0.7 0.7L5.5 5.5L10.3 0.7" fill="none" stroke="#8a8a8a" stroke-width="1.1"/></svg>
<div class="t" style="top:281px;font-size:14.6px;color:#1e3287;left:22.19999999999999px;">Last week (4)</div>
<div class="a" style="left:115px;top:288.2px;width:634px;height:1px;background:#e2e2e2;"></div>
<svg class="a" style="left:19px;top:304.9px;" width="16" height="16" viewBox="0 0 16 16"><path d="M11.8 0.3L15.8 2.2V13.8L11.8 15.7Z" fill="#1f9cf0"/><path d="M11.8 0.3L4.2 7.2L1.2 4.9L0 5.5V10.5L1.2 11.1L4.2 8.8L11.8 15.7L12.2 11.5L7 8L12.2 4.5Z" fill="#0065a9"/><path d="M11.8 0.3L4.2 7.2L1.2 4.9L0 5.5L11.8 15.7L12.2 11.5L7 8L12.2 4.5Z" fill="#007acc" opacity=".85"/></svg>
<div class="t" style="top:309px;font-size:11.4px;color:#000;left:39.099999999999994px;transform:scaleX(0.9950);transform-origin:left top;">SiWx917_Enablement_For_Ozone.md</div>
<div class="t" style="top:309px;font-size:11.5px;color:#6d6d6d;left:342.4px;">7/24/2024 3:02 PM</div>
<div class="t" style="top:309px;font-size:11.5px;color:#6d6d6d;left:486px;">MD File</div>
<div class="t" style="top:309px;font-size:11.5px;color:#6d6d6d;right:85.20000000000005px;">4 KB</div>
<svg class="a" style="left:19px;top:325.9px;" width="16" height="16" viewBox="0 0 16 16"><path d="M4.5 3V1.2Q4.5 0.5 5.2 0.5H10.8Q11.5 0.5 11.5 1.2V3" fill="none" stroke="#38a6e8" stroke-width="1"/><rect x="0.5" y="3" width="15" height="12.5" rx="2" fill="#1c5aa6"/><rect x="0.5" y="9" width="15" height="6.5" rx="2" fill="#17497f"/><path d="M8 5.5V12M5 9L8 12L11 9" fill="none" stroke="#fff" stroke-width="1.8"/></svg>
<div class="t" style="top:330px;font-size:11.4px;color:#000;left:39.099999999999994px;transform:scaleX(1.0202);transform-origin:left top;">WiFi Analyzer Installer.exe</div>
<div class="t" style="top:330px;font-size:11.5px;color:#6d6d6d;left:342.4px;">7/24/2024 2:19 PM</div>
<div class="t" style="top:330px;font-size:11.5px;color:#6d6d6d;left:486px;">Application</div>
<div class="t" style="top:330px;font-size:11.5px;color:#6d6d6d;right:85.20000000000005px;">844 KB</div>
<svg class="a" style="left:21px;top:346.9px;" width="13" height="16" viewBox="0 0 13 16"><path d="M0.5 0.5H10.5V15.5H0.5Z" fill="#fde9a6" stroke="#e4be55"/><path d="M10.5 7.5H12.5V15.5H10.5Z" fill="#f7d774" stroke="#e4be55"/><rect x="5" y="0.5" width="3.2" height="15" fill="#d8d8d8"/><circle cx="6.6" cy="3" r="0.9" fill="#333"/><circle cx="6.6" cy="6" r="0.9" fill="#333"/><path d="M5.4 8L7.8 9L5.4 10L7.8 11L5.4 12L7.8 13L5.4 14L7.8 15" fill="none" stroke="#555" stroke-width="0.8"/></svg>
<div class="t" style="top:351px;font-size:11.4px;color:#000;left:39.099999999999994px;transform:scaleX(1.0110);transform-origin:left top;">2024-07-08-RC4-Full.zip</div>
<div class="t" style="top:351px;font-size:11.5px;color:#6d6d6d;left:342.4px;">7/24/2024 11:40 AM</div>
<div class="t" style="top:351px;font-size:11.5px;color:#6d6d6d;left:486px;">Compressed (zipp...</div>
<div class="t" style="top:351px;font-size:11.5px;color:#6d6d6d;right:85.20000000000005px;">1,775,347 KB</div>
<svg class="a" style="left:21px;top:367.9px;" width="13" height="16" viewBox="0 0 13 16"><path d="M0.5 0.5H10.5V15.5H0.5Z" fill="#fde9a6" stroke="#e4be55"/><path d="M10.5 7.5H12.5V15.5H10.5Z" fill="#f7d774" stroke="#e4be55"/></svg>
<div class="t" style="top:372px;font-size:11.4px;color:#000;left:39.099999999999994px;transform:scaleX(1.0077);transform-origin:left top;">2024-07-08-RC4-Full</div>
<div class="t" style="top:372px;font-size:11.5px;color:#6d6d6d;left:342.4px;">7/24/2024 11:36 AM</div>
<div class="t" style="top:372px;font-size:11.5px;color:#6d6d6d;left:486px;">File folder</div>
<div class="t" style="top:372px;font-size:11.5px;color:#6d6d6d;right:85.20000000000005px;"></div>
<svg class="a" style="left:7px;top:400.29999999999995px;" width="11" height="7" viewBox="0 0 11 7"><path d="M0.7 0.7L5.5 5.5L10.3 0.7" fill="none" stroke="#8a8a8a" stroke-width="1.1"/></svg>
<div class="t" style="top:396px;font-size:14.6px;color:#1e3287;left:22.19999999999999px;">Earlier this month (18)</div>
<div class="a" style="left:178px;top:403.9px;width:571px;height:1px;background:#e2e2e2;"></div>
</div>
<div class="t" style="top:607px;font-size:11.5px;color:#000;left:138.3px;transform:scaleX(0.9949);transform-origin:left top;">File name:</div>
<div class="a" style="left:196px;top:600px;width:542px;height:24px;background:#fff;border:1px solid #0078d7"></div>
<div class="a" style="left:201px;top:605px;width:1px;height:15px;background:#000;"></div>
<svg class="a" style="left:724px;top:609px;" width="11" height="7" viewBox="0 0 11 7"><path d="M1 1L5.5 5.5L10 1" fill="none" stroke="#404040" stroke-width="1.3"/></svg>
<div class="a" style="left:750px;top:600px;width:188px;height:23px;background:#e1e1e1;border:1px solid #adadad"></div>
<div class="t" style="top:607px;font-size:11.5px;color:#000;left:754.4px;transform:scaleX(0.9897);transform-origin:left top;">All Files (*)</div>
<svg class="a" style="left:924px;top:609px;" width="11" height="7" viewBox="0 0 11 7"><path d="M1 1L5.5 5.5L10 1" fill="none" stroke="#404040" stroke-width="1.3"/></svg>
<div class="a" style="left:751px;top:630px;width:87px;height:24px;background:#e1e1e1;border:2px solid #0078d7"></div>
<div class="t" style="top:637px;font-size:11.5px;color:#000;left:779.4px;transform:scaleX(0.9948);transform-origin:left top;">Open</div>
<div class="a" style="left:851px;top:630px;width:87px;height:24px;background:#e1e1e1;border:1px solid #adadad"></div>
<div class="t" style="top:637px;font-size:11.5px;color:#000;left:876.2px;transform:scaleX(0.9946);transform-origin:left top;">Cancel</div>
<div class="a" style="left:950px;top:657px;width:2px;height:2px;background:#bdbdbd;"></div>
<div class="a" style="left:947px;top:660px;width:2px;height:2px;background:#bdbdbd;"></div>
<div class="a" style="left:950px;top:660px;width:2px;height:2px;background:#bdbdbd;"></div>
<div class="a" style="left:944px;top:663px;width:2px;height:2px;background:#bdbdbd;"></div>
<div class="a" style="left:947px;top:663px;width:2px;height:2px;background:#bdbdbd;"></div>
<div class="a" style="left:950px;top:663px;width:2px;height:2px;background:#bdbdbd;"></div>
<div class="a" style="left:194px;top:592px;width:551px;height:39px;background:none;border:5px solid #ec1c24"></div>
<div class="a" style="left:746px;top:625px;width:94px;height:34px;background:none;border:5px solid #ec1c24"></div>
<div class="t" style="top:567px;font-size:23.7px;color:#ec1c24;left:446px;">1</div>
<div class="t" style="top:597px;font-size:24px;color:#ec1c24;font-weight:bold;left:828.8px;">2</div>
<svg class="a" style="left:455px;top:460px;" width="245" height="110" viewBox="0 0 245 110"><path d="M 99 91.4 A 114.6 42.4 0 1 0 56 84.6 L 57.5 102.6 Z" fill="#fff" stroke="#ec1c24" stroke-width="4.7" stroke-linejoin="miter" stroke-miterlimit="10"/></svg>
<div class="t" style="top:499px;font-size:13.3px;color:#000;font-weight:bold;left:478px;letter-spacing:0.72px">Provide the path of the .axf</div>
<div class="t" style="top:517px;font-size:13.3px;color:#000;font-weight:bold;left:522.5px;letter-spacing:0.72px">or .out file here</div>
</body></html>
